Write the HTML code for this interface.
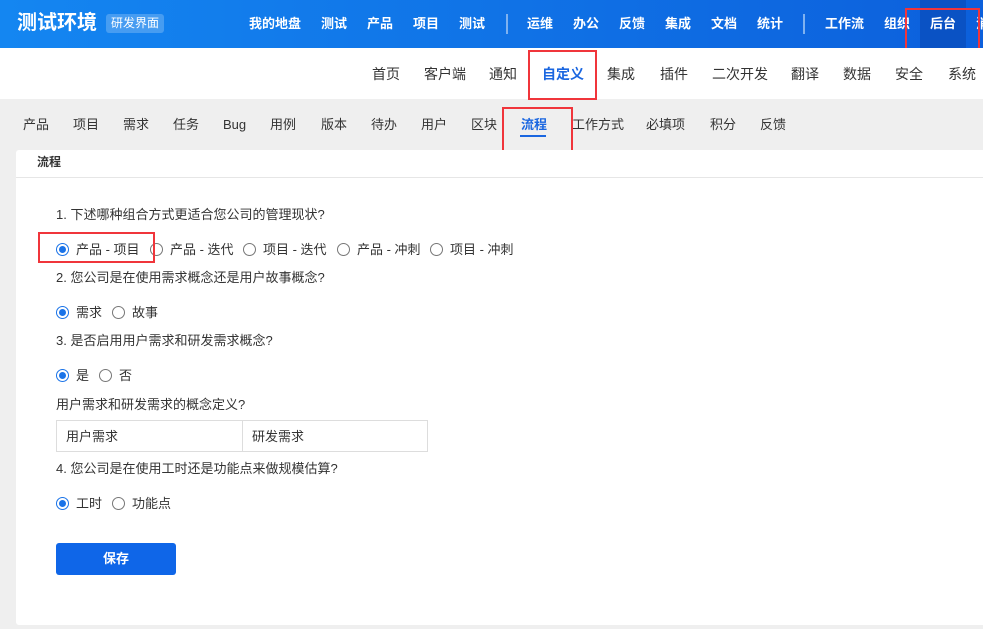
<!DOCTYPE html>
<html><head><meta charset="utf-8"><style>
*{margin:0;padding:0;box-sizing:border-box}
body{width:983px;height:629px;overflow:hidden;background:#efefef;font-family:"Liberation Sans","Noto Sans CJK SC",sans-serif;position:relative;color:#333}
.a{position:absolute;white-space:nowrap;line-height:1}
#top{position:absolute;left:0;top:0;width:983px;height:48px;background:linear-gradient(90deg,#1486f1,#0c60dc)}
#top .n{color:#fff;font-weight:bold;font-size:13px;top:17px}
.sep{position:absolute;top:14px;width:2px;height:20px;background:#7fb2f0}
#sub{position:absolute;left:0;top:48px;width:983px;height:51px;background:#fff}
.s{font-size:14px;top:67px;color:#333}
.t{font-size:13px;top:118px;color:#333}
.red{position:absolute;border:2px solid #f0353b}
#card{position:absolute;left:16px;top:150px;width:980px;height:475px;background:#fff;border-radius:3px}
.q{font-size:13px;color:#333;left:56px}
.r{position:absolute;width:13px;height:13px;border-radius:50%;border:1px solid #777;background:#fff}
.r.on{border:1px solid #1a73e8}
.r.on::after{content:"";position:absolute;left:2px;top:2px;width:7px;height:7px;border-radius:50%;background:#1a73e8}
.o{font-size:13px;color:#333}
.inp{position:absolute;top:420px;height:32px;border:1px solid #ddd;font-size:13px;padding:9px 9px;line-height:1;background:#fff}
</style></head><body>
<div id="top">
<div class="a" style="left:17px;top:13px;color:#fff;font-size:20px;font-weight:bold">测试环境</div>
<div class="a" style="left:106px;top:14px;width:58px;height:19px;background:rgba(255,255,255,.22);border-radius:3px;color:#fff;font-size:12px;padding-top:3px;text-align:center">研发界面</div>
<div class="a n" style="left:249px">我的地盘</div>
<div class="a n" style="left:321px">测试</div>
<div class="a n" style="left:367px">产品</div>
<div class="a n" style="left:413px">项目</div>
<div class="a n" style="left:459px">测试</div>
<div class="sep" style="left:506px"></div>
<div class="a n" style="left:527px">运维</div>
<div class="a n" style="left:573px">办公</div>
<div class="a n" style="left:619px">反馈</div>
<div class="a n" style="left:665px">集成</div>
<div class="a n" style="left:711px">文档</div>
<div class="a n" style="left:757px">统计</div>
<div class="sep" style="left:803px"></div>
<div class="a n" style="left:825px">工作流</div>
<div class="a n" style="left:884px">组织</div>
<div style="position:absolute;left:920px;top:0;width:46px;height:48px;background:#0a52c4"></div>
<div class="a n" style="left:930px">后台</div>
<div class="a n" style="left:976px">消</div>
</div>
<div class="red" style="left:905px;top:8px;width:75px;height:43px"></div>
<div id="sub"></div>
<div class="a s" style="left:372px">首页</div>
<div class="a s" style="left:424px">客户端</div>
<div class="a s" style="left:489px">通知</div>
<div class="a s" style="left:542px;color:#1a66e0;font-weight:bold">自定义</div>
<div class="a s" style="left:607px">集成</div>
<div class="a s" style="left:660px">插件</div>
<div class="a s" style="left:712px">二次开发</div>
<div class="a s" style="left:791px">翻译</div>
<div class="a s" style="left:843px">数据</div>
<div class="a s" style="left:895px">安全</div>
<div class="a s" style="left:948px">系统</div>
<div class="red" style="left:528px;top:50px;width:69px;height:50px"></div>
<div class="a t" style="left:23px">产品</div>
<div class="a t" style="left:73px">项目</div>
<div class="a t" style="left:123px">需求</div>
<div class="a t" style="left:173px">任务</div>
<div class="a t" style="left:223px">Bug</div>
<div class="a t" style="left:270px">用例</div>
<div class="a t" style="left:321px">版本</div>
<div class="a t" style="left:371px">待办</div>
<div class="a t" style="left:421px">用户</div>
<div class="a t" style="left:471px">区块</div>
<div class="a t" style="left:521px;color:#1a66e0;font-weight:bold">流程</div>
<div style="position:absolute;left:520px;top:135px;width:26px;height:2px;background:#1a66e0"></div>
<div class="a t" style="left:572px">工作方式</div>
<div class="a t" style="left:646px">必填项</div>
<div class="a t" style="left:710px">积分</div>
<div class="a t" style="left:760px">反馈</div>
<div class="red" style="left:502px;top:107px;width:71px;height:48px"></div>
<div id="card"></div>
<div class="a" style="left:37px;top:156px;font-size:12px;font-weight:bold">流程</div>
<div style="position:absolute;left:16px;top:177px;width:967px;height:1px;background:#e6e6e6"></div>

<div class="a q" style="top:208px">1. 下述哪种组合方式更适合您公司的管理现状?</div>
<div class="r on" style="left:56px;top:243px"></div><div class="a o" style="left:76px;top:243px">产品 - 项目</div>
<div class="r" style="left:150px;top:243px"></div><div class="a o" style="left:170px;top:243px">产品 - 迭代</div>
<div class="r" style="left:243px;top:243px"></div><div class="a o" style="left:263px;top:243px">项目 - 迭代</div>
<div class="r" style="left:337px;top:243px"></div><div class="a o" style="left:357px;top:243px">产品 - 冲刺</div>
<div class="r" style="left:430px;top:243px"></div><div class="a o" style="left:450px;top:243px">项目 - 冲刺</div>
<div class="red" style="left:38px;top:232px;width:117px;height:31px"></div>

<div class="a q" style="top:271px">2. 您公司是在使用需求概念还是用户故事概念?</div>
<div class="r on" style="left:56px;top:306px"></div><div class="a o" style="left:76px;top:306px">需求</div>
<div class="r" style="left:112px;top:306px"></div><div class="a o" style="left:132px;top:306px">故事</div>

<div class="a q" style="top:334px">3. 是否启用用户需求和研发需求概念?</div>
<div class="r on" style="left:56px;top:369px"></div><div class="a o" style="left:76px;top:369px">是</div>
<div class="r" style="left:99px;top:369px"></div><div class="a o" style="left:119px;top:369px">否</div>

<div class="a q" style="top:398px">用户需求和研发需求的概念定义?</div>
<div class="inp" style="left:56px;width:187px">用户需求</div>
<div class="inp" style="left:242px;width:186px">研发需求</div>

<div class="a q" style="top:462px">4. 您公司是在使用工时还是功能点来做规模估算?</div>
<div class="r on" style="left:56px;top:497px"></div><div class="a o" style="left:76px;top:497px">工时</div>
<div class="r" style="left:112px;top:497px"></div><div class="a o" style="left:132px;top:497px">功能点</div>

<div class="a" style="left:56px;top:543px;width:120px;height:32px;background:#0f66e8;border-radius:3px;color:#fff;font-size:13px;font-weight:bold;text-align:center;line-height:32px">保存</div>
</body></html>
